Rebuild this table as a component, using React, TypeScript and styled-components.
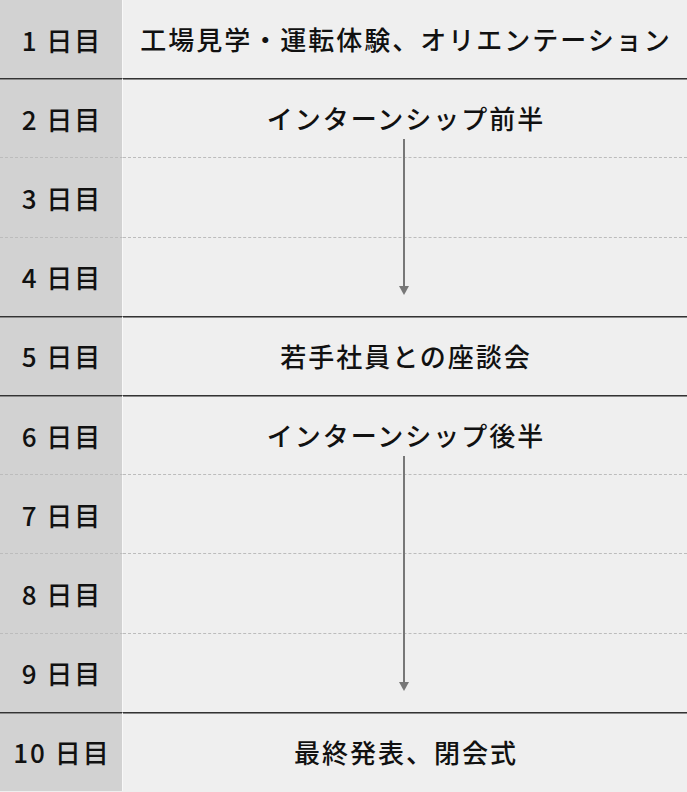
import React from 'react';
import styled, { createGlobalStyle, css } from 'styled-components';

type Line = 'none' | 'solid' | 'dashed';

const GlobalStyle = createGlobalStyle`
  html, body {
    margin: 0;
    padding: 0;
    background-color: #efefef;
  }
  body {
    font-family: 'Noto Sans CJK JP', 'Noto Sans', sans-serif;
    color: #111;
  }
`;

const Table = styled.div`
  display: grid;
  grid-template-columns: 123px 1fr;
  grid-template-rows: repeat(10, 1fr);
  width: 687px;
  height: 792px;
  margin-top: -1px;
  background-color: #efefef;
`;

const lineStyle = (line: Line) => {
  if (line === 'solid') {
    return css`
      border-top: 1px solid #333;
      box-shadow: inset 0 1px 0 #8a8a8a;
    `;
  }
  if (line === 'dashed') {
    return css`
      border-top: 1px dashed #bcbcbc;
    `;
  }
  return css`
    border-top: 1px solid transparent;
  `;
};

const Label = styled.div<{ $row: number; $line: Line }>`
  grid-column: 1;
  grid-row: ${(p) => p.$row};
  display: flex;
  align-items: center;
  justify-content: center;
  background-color: #d2d2d2;
  border-right: 1px solid #f8f8f8;
  font-size: 26px;
  font-weight: 500;
  letter-spacing: 2px;
  padding-left: 2px;
  ${(p) => lineStyle(p.$line)}
`;

const Cell = styled.div<{ $row: number; $line: Line }>`
  grid-column: 2;
  grid-row: ${(p) => p.$row};
  ${(p) => lineStyle(p.$line)}
`;

const Group = styled.div<{ $start: number; $end: number }>`
  grid-column: 2;
  grid-row: ${(p) => p.$start} / ${(p) => p.$end + 1};
  display: flex;
  flex-direction: column;
  align-items: center;
  z-index: 1;
`;

const Title = styled.div<{ $single: boolean }>`
  font-size: 26px;
  font-weight: 500;
  letter-spacing: 2px;
  margin-right: -2px;
  line-height: 26px;
  ${(p) =>
    p.$single
      ? css`
          flex: 1;
          display: flex;
          align-items: center;
          padding-top: 1px;
        `
      : css`
          margin-top: 27px;
        `}
`;

const Arrow = styled.div`
  flex: 1;
  display: flex;
  flex-direction: column;
  align-items: center;
  margin-top: 8px;
  margin-bottom: 21px;
  margin-left: -2px;
`;

const Shaft = styled.div`
  flex: 1;
  width: 2px;
  background-color: #777;
`;

const Head = styled.div`
  width: 0;
  height: 0;
  border-left: 5px solid transparent;
  border-right: 5px solid transparent;
  border-top: 9px solid #777;
`;

const days = [
  { label: '1 日目', line: 'none' as Line },
  { label: '2 日目', line: 'solid' as Line },
  { label: '3 日目', line: 'dashed' as Line },
  { label: '4 日目', line: 'dashed' as Line },
  { label: '5 日目', line: 'solid' as Line },
  { label: '6 日目', line: 'solid' as Line },
  { label: '7 日目', line: 'dashed' as Line },
  { label: '8 日目', line: 'dashed' as Line },
  { label: '9 日目', line: 'dashed' as Line },
  { label: '10 日目', line: 'solid' as Line },
];

const groups = [
  { start: 1, end: 1, title: '工場見学・運転体験、オリエンテーション' },
  { start: 2, end: 4, title: 'インターンシップ前半' },
  { start: 5, end: 5, title: '若手社員との座談会' },
  { start: 6, end: 9, title: 'インターンシップ後半' },
  { start: 10, end: 10, title: '最終発表、閉会式' },
];

const App = () => (
  <>
    <GlobalStyle />
    <Table>
      {days.map((d, i) => (
        <React.Fragment key={d.label}>
          <Label $row={i + 1} $line={d.line}>
            {d.label}
          </Label>
          <Cell $row={i + 1} $line={d.line} />
        </React.Fragment>
      ))}
      {groups.map((g) => (
        <Group key={g.title} $start={g.start} $end={g.end}>
          <Title $single={g.start === g.end}>{g.title}</Title>
          {g.start !== g.end && (
            <Arrow>
              <Shaft />
              <Head />
            </Arrow>
          )}
        </Group>
      ))}
    </Table>
  </>
);

export default App;
